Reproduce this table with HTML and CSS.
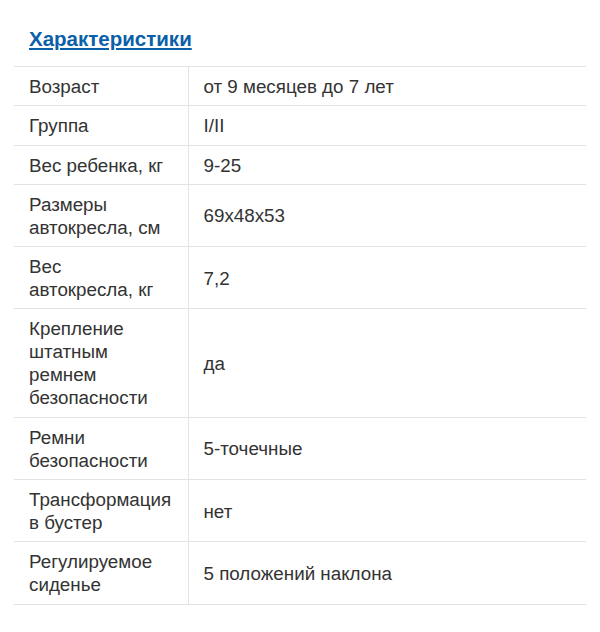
FILE: index.html
```html
<!DOCTYPE html>
<html lang="ru">
<head>
<meta charset="utf-8">
<link rel="stylesheet" href="styles.css">
</head>
<body>
<div class="wrap">
  <h2 class="title"><a href="#">Характеристики</a></h2>
  <table class="specs">
    <colgroup><col class="c1"><col class="c2"></colgroup>
    <tr><td>Возраст</td><td>от 9 месяцев до 7 лет</td></tr>
    <tr><td>Группа</td><td>I/II</td></tr>
    <tr><td>Вес ребенка, кг</td><td>9-25</td></tr>
    <tr><td>Размеры автокресла, см</td><td>69x48x53</td></tr>
    <tr><td>Вес<br>автокресла, кг</td><td>7,2</td></tr>
    <tr><td>Крепление штатным ремнем безопасности</td><td>да</td></tr>
    <tr><td>Ремни безопасности</td><td>5-точечные</td></tr>
    <tr><td>Трансформация в бустер</td><td>нет</td></tr>
    <tr><td>Регулируемое сиденье</td><td>5 положений наклона</td></tr>
  </table>
</div>
</body>
</html>
```
FILE: styles.css
```css
html, body {
  margin: 0;
  padding: 0;
  background: #fff;
}
body {
  font-family: "Liberation Sans", Arial, sans-serif;
  color: #333;
}
.wrap {
  padding: 27px 14px 0 14px;
}
.title {
  margin: 0 0 15px 15px;
  font-size: 20.5px;
  line-height: 24px;
  font-weight: bold;
}
.title a {
  color: #0b5fa9;
  text-decoration: underline;
}
.specs {
  width: 572px;
  border-collapse: collapse;
  table-layout: fixed;
  font-size: 18.8px;
  line-height: 23px;
}
.specs .c1 { width: 174px; }
.specs td {
  border-top: 1px solid #e3e3e3;
  border-bottom: 1px solid #e3e3e3;
  padding: 8px 15px 7.3px 15px;
  vertical-align: middle;
}
.specs td + td {
  border-left: 1px solid #e3e3e3;
}
```
